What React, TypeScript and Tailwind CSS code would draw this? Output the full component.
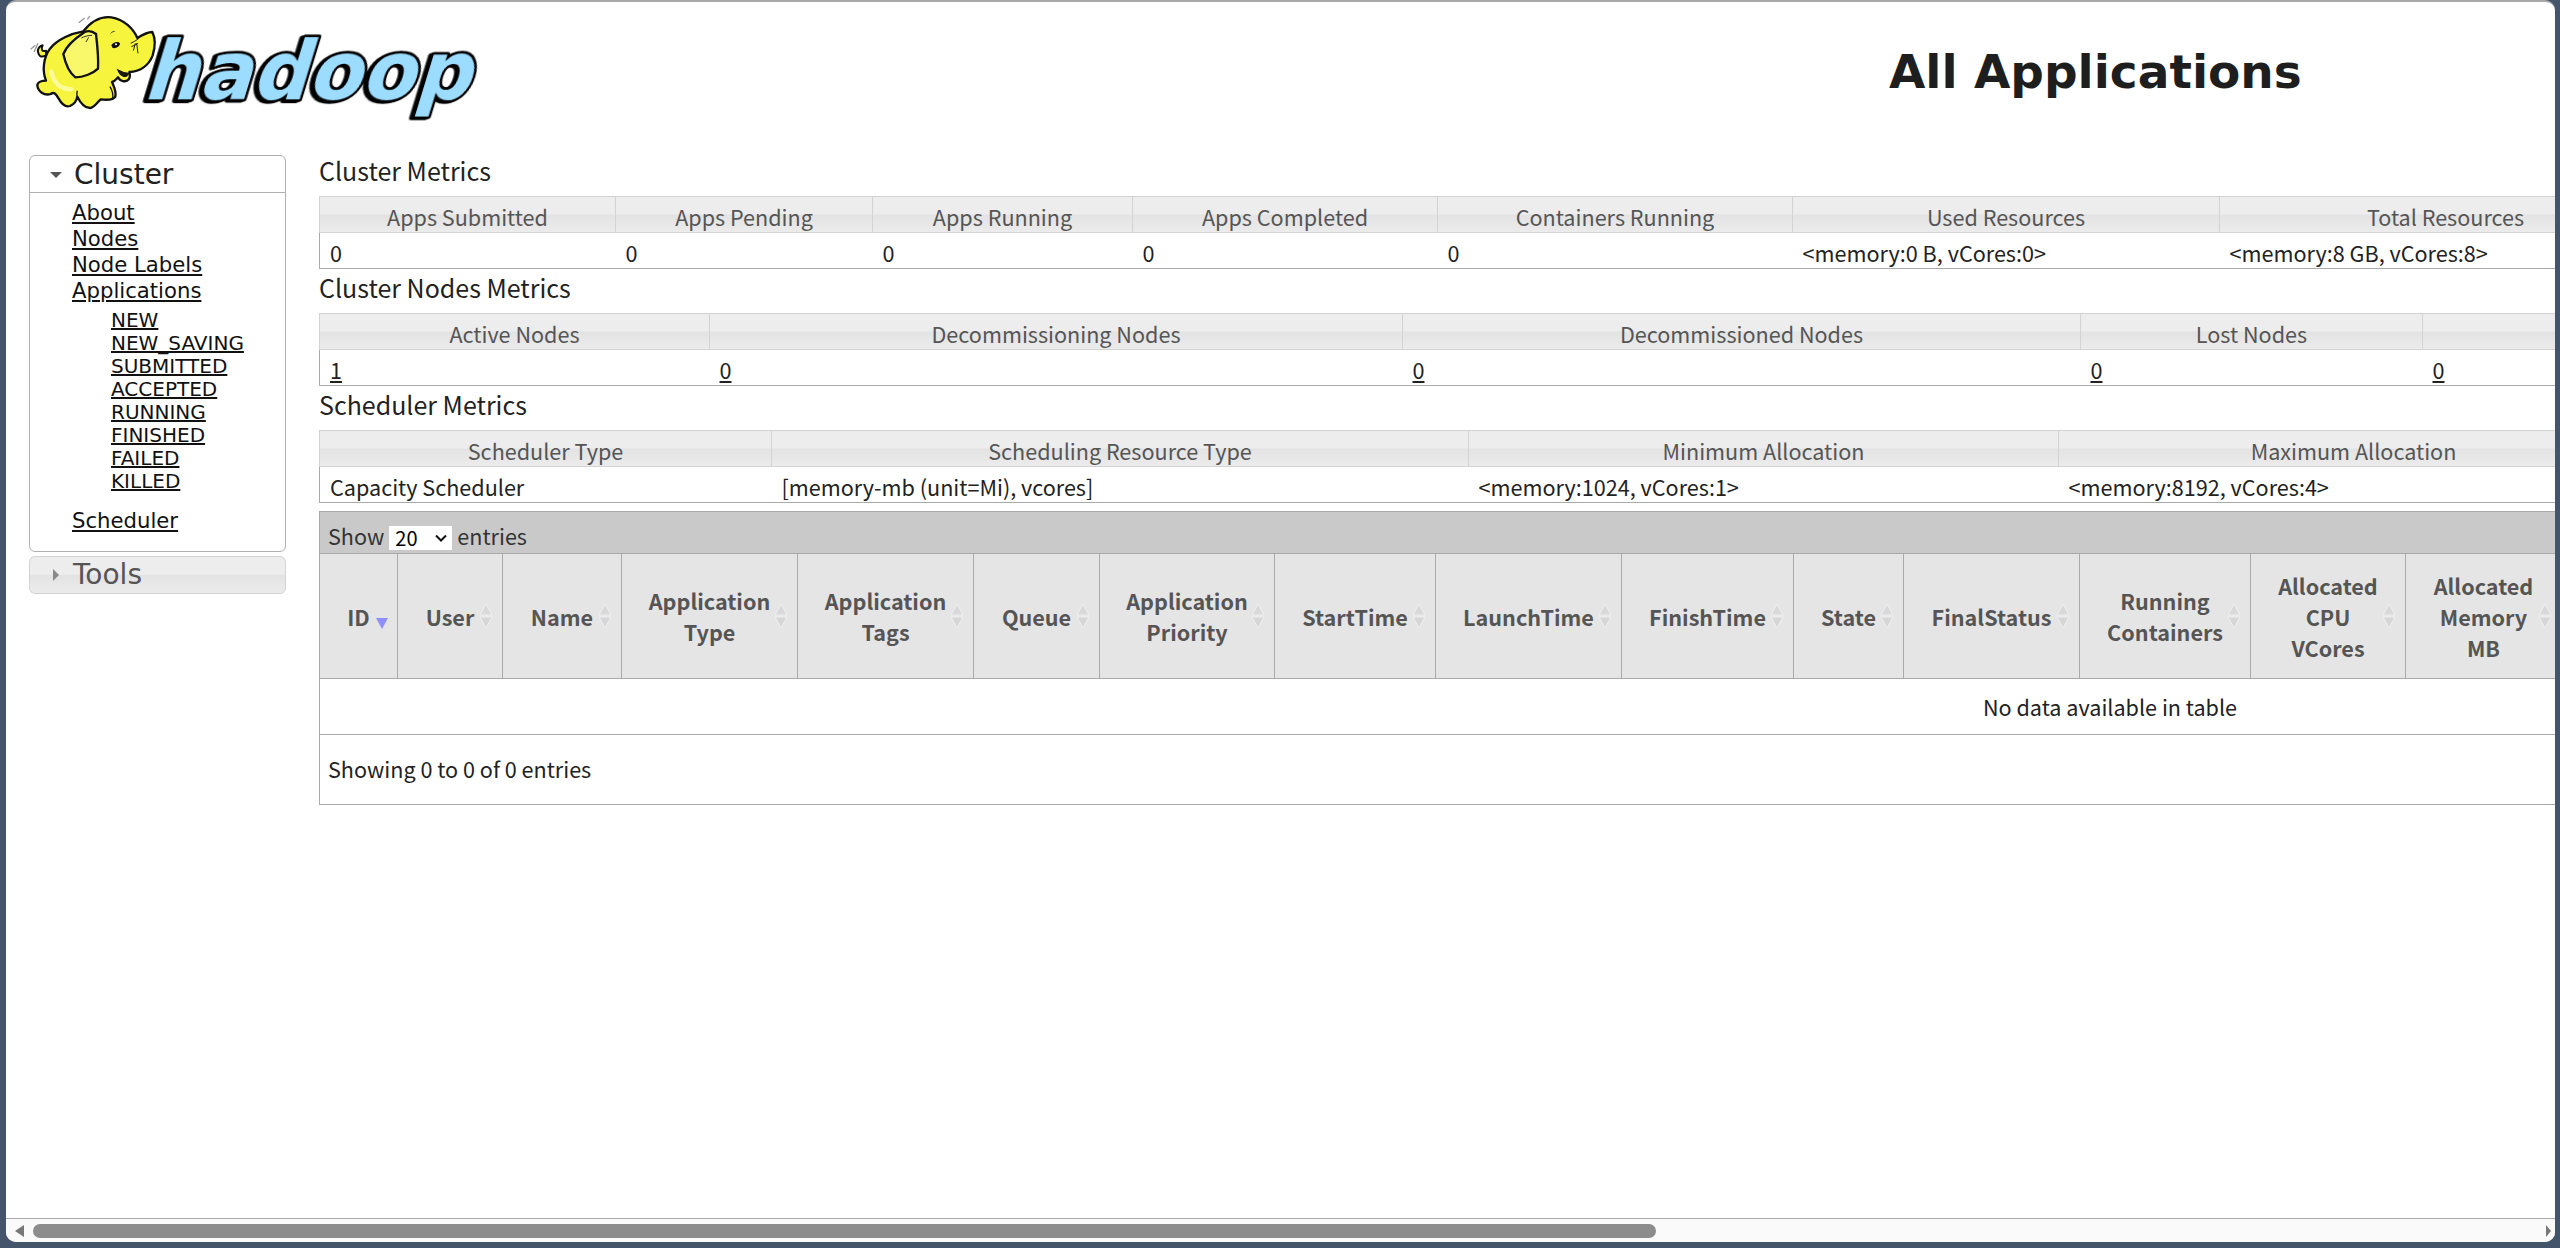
const cjk = "font-['Noto_Sans_CJK_JP','Noto_Sans',sans-serif]";
const dejavu = "font-['DejaVu_Sans',sans-serif]";

const glassBg = "bg-[linear-gradient(#ededed_0%,#ededed_48%,#e3e3e3_50%,#ececec_100%)]";

type MetricCell = { text: string; link?: boolean };

type MetricTable = {
  title: string;
  columns: { label: string; width: string; cell: MetricCell }[];
};

const metricTables: MetricTable[] = [
  {
    title: "Cluster Metrics",
    columns: [
      { label: "Apps Submitted", width: "w-[296px]", cell: { text: "0" } },
      { label: "Apps Pending", width: "w-[257px]", cell: { text: "0" } },
      { label: "Apps Running", width: "w-[260px]", cell: { text: "0" } },
      { label: "Apps Completed", width: "w-[305px]", cell: { text: "0" } },
      { label: "Containers Running", width: "w-[355px]", cell: { text: "0" } },
      { label: "Used Resources", width: "w-[427px]", cell: { text: "<memory:0 B, vCores:0>" } },
      { label: "Total Resources", width: "w-[452px]", cell: { text: "<memory:8 GB, vCores:8>" } },
    ],
  },
  {
    title: "Cluster Nodes Metrics",
    columns: [
      { label: "Active Nodes", width: "w-[390px]", cell: { text: "1", link: true } },
      { label: "Decommissioning Nodes", width: "w-[693px]", cell: { text: "0", link: true } },
      { label: "Decommissioned Nodes", width: "w-[678px]", cell: { text: "0", link: true } },
      { label: "Lost Nodes", width: "w-[342px]", cell: { text: "0", link: true } },
      { label: "Unhealthy Nodes", width: "w-[452px]", cell: { text: "0", link: true } },
    ],
  },
  {
    title: "Scheduler Metrics",
    columns: [
      { label: "Scheduler Type", width: "w-[452px]", cell: { text: "Capacity Scheduler" } },
      { label: "Scheduling Resource Type", width: "w-[697px]", cell: { text: "[memory-mb (unit=Mi), vcores]" } },
      { label: "Minimum Allocation", width: "w-[590px]", cell: { text: "<memory:1024, vCores:1>" } },
      { label: "Maximum Allocation", width: "w-[590px]", cell: { text: "<memory:8192, vCores:4>" } },
    ],
  },
];

const appColumns: { lines: string[]; width: string }[] = [
  { lines: ["ID"], width: "w-[78px]" },
  { lines: ["User"], width: "w-[105px]" },
  { lines: ["Name"], width: "w-[119px]" },
  { lines: ["Application", "Type"], width: "w-[176px]" },
  { lines: ["Application", "Tags"], width: "w-[176px]" },
  { lines: ["Queue"], width: "w-[126px]" },
  { lines: ["Application", "Priority"], width: "w-[175px]" },
  { lines: ["StartTime"], width: "w-[161px]" },
  { lines: ["LaunchTime"], width: "w-[186px]" },
  { lines: ["FinishTime"], width: "w-[172px]" },
  { lines: ["State"], width: "w-[110px]" },
  { lines: ["FinalStatus"], width: "w-[176px]" },
  { lines: ["Running", "Containers"], width: "w-[171px]" },
  { lines: ["Allocated", "CPU", "VCores"], width: "w-[155px]" },
  { lines: ["Allocated", "Memory", "MB"], width: "w-[156px]" },
];

const stateLinks = ["NEW", "NEW_SAVING", "SUBMITTED", "ACCEPTED", "RUNNING", "FINISHED", "FAILED", "KILLED"];

function HadoopLogo() {
  return (
    <svg viewBox="0 0 1410 375" className="ml-[12px] h-[125px] w-[470px] shrink-0">
      {/* wordmark */}
      <g transform="translate(372 292) skewX(-17)">
        <text
          x="0"
          y="0"
          textLength="982"
          lengthAdjust="spacingAndGlyphs"
          fontFamily="DejaVu Sans"
          fontWeight="700"
          fontSize="244"
          fill="#9cdcff"
          stroke="#000"
          strokeWidth="16"
          strokeLinejoin="round"
          paintOrder="stroke"
          className="[filter:drop-shadow(-8px_3px_0_#000)]"
        >
          hadoop
        </text>
      </g>
      {/* tail */}
      <path d="M84 160C66 170 62 158 60 150C58 142 64 132 74 130C68 142 72 150 84 146Z" fill="#f6f43c" stroke="#111" strokeWidth="6" strokeLinejoin="round" />
      <path d="M52 130l-14 12M60 124l-12 26M200 48l-18 14M216 42l-8 10" stroke="#999" strokeWidth="4" fill="none" />
      {/* body */}
      <path
        d="M403 90C390 90 374 98 358 108C346 80 318 52 280 46C246 42 218 60 196 88C160 94 118 112 96 140C76 168 72 205 84 236C72 236 58 240 58 250C60 268 78 282 98 276C106 270 112 272 122 290C132 308 144 316 156 312C170 306 176 296 178 284C186 300 200 318 216 318C230 316 236 302 248 292C262 294 284 294 292 284C296 270 288 254 282 240C290 238 296 230 300 226C306 238 322 242 332 232C338 224 336 216 334 210C364 208 392 192 404 160C412 134 412 108 403 90Z"
        fill="#f6f43c"
        stroke="#111"
        strokeWidth="7"
        strokeLinejoin="round"
      />
      {/* ear */}
      <path
        d="M200 90C176 106 146 130 136 156C142 184 154 212 172 226C196 226 226 214 240 200C242 170 238 130 234 96C224 88 210 86 200 90Z"
        fill="#f9f76a"
        stroke="#111"
        strokeWidth="7"
        strokeLinejoin="round"
      />
      <path d="M100 210C110 250 130 262 160 262" stroke="#fcfb9a" strokeWidth="14" fill="none" strokeLinecap="round" />
      <path d="M190 108c8-4 20-8 32-8M204 120l8-14M278 94c4-4 8-6 12-6" stroke="#333" strokeWidth="3" fill="none" />
      {/* eye, wrinkles, mouth */}
      <path d="M280 130C284 120 300 116 306 124C306 134 294 140 284 138Z" fill="#111" />
      <circle cx="294" cy="127" r="3" fill="#fff" />
      <path d="M338 124c8-4 16-8 24-14M340 134c6-2 14-6 20-10M346 146l6-22M360 154l-4-30" stroke="#222" strokeWidth="3" fill="none" />
      <path d="M300 204C306 220 322 232 332 214C320 214 310 210 300 204Z" fill="#1c1c00" stroke="#111" strokeWidth="4" />
      <path d="M276 254c6 10 10 24 8 36M178 284c-2-6-2-12 0-18" stroke="#111" strokeWidth="4" fill="none" />
    </svg>
  );
}

function MetricsSection({ table }: { table: MetricTable }) {
  return (
    <section>
      <h3 className={`h-[44px] text-[25px] leading-[36px] font-normal text-[#222] ${cjk}`}>{table.title}</h3>
      <table className={`table-fixed border-collapse text-[21.6px] ${cjk}`}>
        <colgroup>
          {table.columns.map((c) => (
            <col key={c.label} className={c.width} />
          ))}
        </colgroup>
        <thead>
          <tr className="h-[36px]">
            {table.columns.map((c) => (
              <th
                key={c.label}
                className={`border border-[#d3d3d3] pt-[4px] text-center leading-[28px] font-normal whitespace-nowrap text-[#555] ${glassBg}`}
              >
                {c.label}
              </th>
            ))}
          </tr>
        </thead>
        <tbody>
          <tr className="h-[36px]">
            {table.columns.map((c) => (
              <td key={c.label} className="border-b border-b-[#aaa] pt-[5px] pl-[10px] leading-[28px] whitespace-nowrap text-[#222] first:border-l first:border-l-[#aaa]">
                {c.cell.link ? <a className="underline" href="#">{c.cell.text}</a> : c.cell.text}
              </td>
            ))}
          </tr>
        </tbody>
      </table>
    </section>
  );
}

function SortIcon() {
  return (
    <svg viewBox="0 0 14 26" className="absolute top-[50%] right-[9px] h-[26px] w-[14px] -translate-y-1/2">
      <path d="M7 1L13 12H1Z" fill="#d9d9d9" stroke="#f0f0f0" strokeWidth="1" />
      <path d="M7 25L13 14H1Z" fill="#d6d6d6" stroke="#f0f0f0" strokeWidth="1" />
    </svg>
  );
}

function SortDesc() {
  return (
    <svg viewBox="0 0 12 11" className="absolute top-[64px] right-[9px] h-[11px] w-[12px]">
      <path d="M0 0H12L6 11Z" fill="#8f8fff" />
    </svg>
  );
}

function ApplicationsTable() {
  return (
    <div className={`mt-[8px] w-[3582px] text-[21.6px] text-[#222] ${cjk}`}>
      <div className="flex h-[42px] items-end border-t border-l border-[#aaa] bg-[#c9c9c9] pb-[2px] pl-[8px] text-[#333]">
        <span className="leading-[30px]">Show</span>
        <span className="mx-[5px] mb-[1px] flex h-[24px] w-[63px] items-center justify-between bg-white pr-[4px] pl-[6px] text-[20px] leading-none text-black">
          20
          <svg viewBox="0 0 14 8" className="h-[8px] w-[14px]">
            <path d="M2 1.5L7 6.5L12 1.5" fill="none" stroke="#111" strokeWidth="2" />
          </svg>
        </span>
        <span className="leading-[30px]">entries</span>
      </div>
      <table className="w-full table-fixed border-collapse">
        <colgroup>
          {appColumns.map((c) => (
            <col key={c.lines.join(" ")} className={c.width} />
          ))}
          <col />
        </colgroup>
        <thead>
          <tr className="h-[125px] bg-[#e5e5e5]">
            {appColumns.map((c, i) => (
              <th
                key={c.lines.join(" ")}
                className="relative border border-[#aaa] px-0 text-center text-[21.6px] leading-[31px] font-bold whitespace-nowrap text-[#555]"
              >
                {c.lines.map((l) => (
                  <div key={l}>{l}</div>
                ))}
                {i === 0 ? <SortDesc /> : <SortIcon />}
              </th>
            ))}
            <th className="border border-[#aaa]"></th>
          </tr>
        </thead>
        <tbody>
          <tr className="h-[56px]">
            <td colSpan={16} className="border-x border-b border-[#aaa] pt-[2px] text-center">
              No data available in table
            </td>
          </tr>
        </tbody>
      </table>
      <div className="flex h-[70px] items-center border-x border-b border-[#aaa] pl-[8px]">Showing 0 to 0 of 0 entries</div>
    </div>
  );
}

function Sidebar() {
  return (
    <aside className={`mt-[3px] w-[257px] shrink-0 ${dejavu}`}>
      <div className="rounded-[6px] border border-[#b0b0b0] bg-white">
        <div className="flex h-[37px] items-center border-b border-[#b0b0b0] pt-[2px] pl-[20px] text-[28px] text-[#222]">
          <span className="mr-[12px] h-0 w-0 border-x-[6px] border-t-[6px] border-x-transparent border-t-[#555]" />
          Cluster
        </div>
        <div className="pt-[7px] pb-[17px] pl-[42px] text-[#111]">
          <ul className="text-[21.2px] leading-[26px]">
            <li><a className="underline" href="#">About</a></li>
            <li><a className="underline" href="#">Nodes</a></li>
            <li><a className="underline" href="#">Node Labels</a></li>
            <li><a className="underline" href="#">Applications</a></li>
          </ul>
          <ul className="mt-[5px] pl-[39px] text-[20px] leading-[23px]">
            {stateLinks.map((s) => (
              <li key={s}><a className="underline" href="#">{s}</a></li>
            ))}
          </ul>
          <div className="mt-[15px] text-[21.2px] leading-[26px]">
            <a className="underline" href="#">Scheduler</a>
          </div>
        </div>
      </div>
      <div className={`mt-[4px] flex h-[38px] items-center rounded-[6px] border border-[#d3d3d3] pl-[23px] text-[28px] text-[#555] ${glassBg}`}>
        <span className="mr-[14px] h-0 w-0 border-y-[6px] border-l-[6px] border-y-transparent border-l-[#888]" />
        Tools
      </div>
    </aside>
  );
}

function Scrollbar() {
  return (
    <div className="flex h-[24px] shrink-0 items-center border-t border-[#aaa] bg-[#fafafa]">
      <span className="ml-[9px] h-0 w-0 border-y-[6px] border-r-[9px] border-y-transparent border-r-[#777]" />
      <div className="ml-[9px] h-[14px] w-[1623px] rounded-[7px] bg-[#8c8c8c]" />
      <span className="mr-[4px] ml-auto h-0 w-0 border-y-[6px] border-l-[5px] border-y-transparent border-l-[#777]" />
    </div>
  );
}

export default function App() {
  return (
    <div className="flex h-[1248px] w-[2560px] overflow-hidden bg-[#44546a] pr-[5px] pb-[6px] pl-[6px]">
      <div className="flex min-w-0 flex-1 flex-col overflow-hidden rounded-t-[10px] rounded-b-[10px] border-t-2 border-[#a8a8a8] bg-white">
        <div className="min-h-0 flex-1 overflow-hidden">
          <header className="flex h-[150px] items-start">
            <HadoopLogo />
            <h1 className={`mt-[40px] ml-[1401px] text-[47px] leading-[60px] font-bold whitespace-nowrap text-[#1e1e1e] ${dejavu}`}>
              All Applications
            </h1>
          </header>
          <div className="flex w-[4000px] pl-[23px]">
            <Sidebar />
            <main className="ml-[33px] min-w-0">
              {metricTables.map((t) => (
                <MetricsSection key={t.title} table={t} />
              ))}
              <ApplicationsTable />
            </main>
          </div>
        </div>
        <Scrollbar />
      </div>
    </div>
  );
}
